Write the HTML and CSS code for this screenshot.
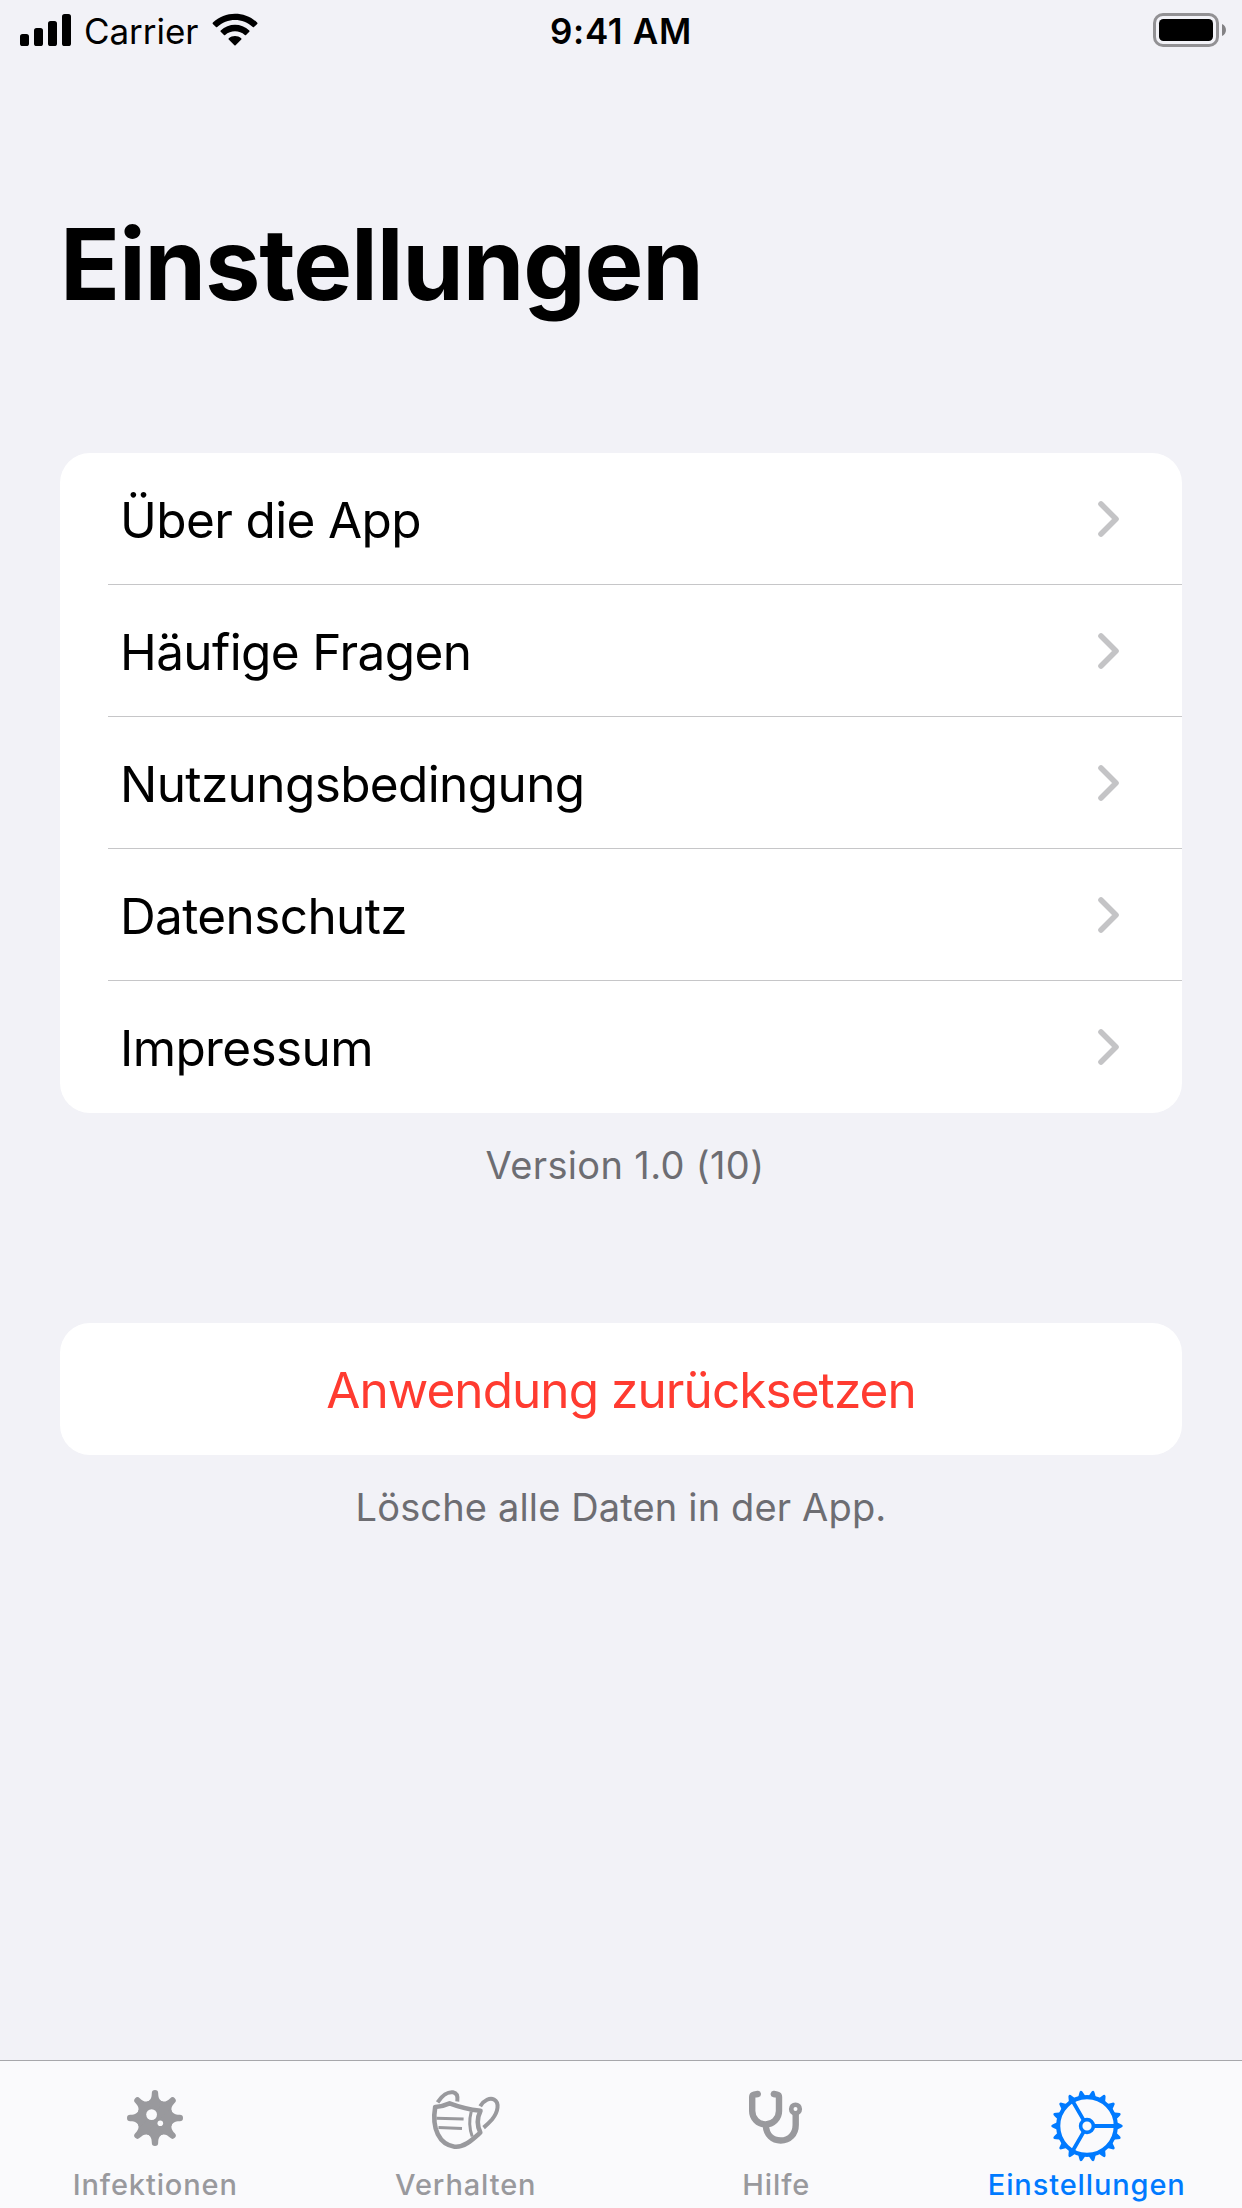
FILE: index.html
```html
<!DOCTYPE html>
<html lang="de">
<head>
<meta charset="utf-8">
<title>Einstellungen</title>
<link rel="stylesheet" href="styles.css">
</head>
<body>
<div class="screen">
  <header class="status">
    <div class="status-left">
      <svg class="signal" width="52" height="32" viewBox="0 0 52 32"><rect x="0" y="20" width="9" height="12" rx="2.6"/><rect x="14" y="14" width="9" height="18" rx="2.6"/><rect x="28" y="7" width="9" height="25" rx="2.6"/><rect x="42" y="0" width="9" height="32" rx="2.6"/></svg>
      <span class="carrier">Carrier</span>
      <svg class="wifi" width="46" height="34" viewBox="0 0 46 34"><path d="M.9 9.4C13.2-2.3 32.8-2.3 45.1 9.4c.6.6.6 1 .1 1.5L42 14.100q-.6.5-1.200 0C31 4.700 15 4.700 5.200 14.100q-.6.5-1.200 0L.8 10.900q-.5-.8.100-1.500Z"/><path d="M8.700 17.400C16.700 9.700 29.300 9.700 37.300 17.400q.6.700 0 1.300L34 21.900q-.6.5-1.200 0C27.300 17 18.700 17 13.200 21.900q-.6.5-1.200 0L8.700 18.700q-.6-.6 0-1.300Z"/><path d="M16.800 25.300C20.300 22.200 25.700 22.200 29.200 25.300q.7.700.1 1.300L23.600 32.300q-.6.500-1.200 0L16.700 26.600q-.6-.6.100-1.300Z"/></svg>
    </div>
    <span class="time">9:41 AM</span>
    <div class="status-right">
      <svg width="74" height="34" viewBox="0 0 74 34"><rect x="1.500" y="1.500" width="63" height="31" rx="8.500" fill="none" stroke="#929194" stroke-width="3"/><rect x="6" y="6" width="54" height="22" rx="4.500"/><path d="M69 11c5.300 2 5.300 10 0 12Z" fill="#838285"/></svg>
    </div>
  </header>
  <main class="content">
    <h1 class="title">Einstellungen</h1>
    <ul class="card">
      <li class="row"><span>Über die App</span><svg class="chev" width="21" height="36" viewBox="0 0 21 36"><path d="M3 3 18 18 3 33"/></svg></li>
      <li class="row"><span>Häufige Fragen</span><svg class="chev" width="21" height="36" viewBox="0 0 21 36"><path d="M3 3 18 18 3 33"/></svg></li>
      <li class="row"><span>Nutzungsbedingung</span><svg class="chev" width="21" height="36" viewBox="0 0 21 36"><path d="M3 3 18 18 3 33"/></svg></li>
      <li class="row"><span>Datenschutz</span><svg class="chev" width="21" height="36" viewBox="0 0 21 36"><path d="M3 3 18 18 3 33"/></svg></li>
      <li class="row"><span>Impressum</span><svg class="chev" width="21" height="36" viewBox="0 0 21 36"><path d="M3 3 18 18 3 33"/></svg></li>
    </ul>
    <p class="note version">Version 1.0 (10)</p>
    <button class="reset">Anwendung zurücksetzen</button>
    <p class="note">Lösche alle Daten in der App.</p>
  </main>
  <nav class="tabs">
    <a class="tab">
      <svg width="72" height="72" viewBox="0 0 72 72"><g fill="currentColor"><circle cx="36" cy="36" r="18"/><path id="arm" d="M32.800 11.200a3.200 3.200 0 0 1 6.400 0C39.200 16.500 41 19 45.500 20.500L36 30 26.500 20.500C31 19 32.800 16.500 32.800 11.200Z"/><use href="#arm" transform="rotate(45 36 36)"/><use href="#arm" transform="rotate(90 36 36)"/><use href="#arm" transform="rotate(135 36 36)"/><use href="#arm" transform="rotate(180 36 36)"/><use href="#arm" transform="rotate(225 36 36)"/><use href="#arm" transform="rotate(270 36 36)"/><use href="#arm" transform="rotate(315 36 36)"/></g><circle cx="32.600" cy="32.600" r="5.400" fill="#fafafc"/><circle cx="41.300" cy="41.300" r="2.800" fill="#fafafc"/></svg>
      <span>Infektionen</span>
    </a>
    <a class="tab">
      <svg width="72" height="72" viewBox="0 0 72 72" fill="none" stroke="currentColor" stroke-linejoin="round"><path stroke-width="4" d="M7.600 20.300C12 13.500 18 9.500 23 10.300C27.500 11 28 14.500 27.300 19.500"/><path stroke-width="4" d="M50.200 24.200C54 18 60 15.500 64 17.500C69.500 20.500 68.500 29.500 62 37.500Q58 42 53.600 45.600"/><path stroke-width="4.600" d="M5.200 25Q12.500 24.500 19.600 21.300Q34 26.800 50.500 28.800C47 36 47.200 44 50.300 50.600C42 58 34 65.800 24.500 64.700C9.500 62.500 1.500 47 5.200 25Z"/><path stroke-width="3" d="M41.200 29.700C39 38 39 46 42.200 54.500M6.500 36.200 33.600 37M8.500 45.500 32 46.500"/></svg>
      <span>Verhalten</span>
    </a>
    <a class="tab">
      <svg width="72" height="72" viewBox="0 0 72 72" fill="none" stroke="currentColor" stroke-width="6.400" stroke-linecap="round"><path d="M17.800 12 14 12.600Q12.200 12.900 12.200 15V29A13.400 13.400 0 0 0 39 29V15Q39 12.900 37.200 12.600L33.800 12"/><path stroke-linecap="butt" d="M25.800 43.500C26.500 53 32.500 58.500 40.700 58.500C49.500 58.500 55.700 52 55.700 43V32"/><circle cx="55.500" cy="27" r="4.300" stroke-width="4.600"/></svg>
      <span>Hilfe</span>
    </a>
    <a class="tab active">
      <svg class="gear" width="72" height="72" viewBox="0 0 72 72" fill="none" stroke="currentColor"><circle cx="36" cy="36" r="28.800" stroke-width="4.200"/><circle cx="36" cy="36" r="6.400" stroke-width="3.600"/><path stroke-width="3.800" d="M43 36H65M32.500 29.900 21.600 11M32.500 42.100 21.600 61"/><g id="teeth"></g></svg>
      <span>Einstellungen</span>
    </a>
  </nav>
</div>
<script src="gear.js"></script>
</body>
</html>
```
FILE: gear.js
```js
// Adds the eighteen teeth around the rim of the settings gear.
const teeth = document.getElementById("teeth");
for (let i = 0; i < 18; i++) {
  const tooth = document.createElementNS("http://www.w3.org/2000/svg", "path");
  tooth.setAttribute("d", "M64 31.500 69.500 34Q71.800 34.800 71.800 36T69.500 38L64 40.500Z");
  tooth.setAttribute("fill", "currentColor");
  tooth.setAttribute("stroke", "none");
  tooth.setAttribute("transform", `rotate(${i * 20} 36 36)`);
  teeth.appendChild(tooth);
}
```
FILE: styles.css
```css
* { box-sizing: border-box; }
body { margin: 0; background: #f2f2f7; color: #000; font-family: Inter, "Liberation Sans", sans-serif; }
.screen { width: 1242px; height: 2208px; display: flex; flex-direction: column; }
.status { height: 60px; display: grid; grid-template-columns: 1fr auto 1fr; padding: 0 15px; }
.status-left { display: flex; align-items: flex-start; }
.signal { margin: 14px 0 0 5px; }
.carrier { margin-left: 12px; font-size: 35px; line-height: 62px; letter-spacing: -0.05px; }
.wifi { margin: 13px 0 0 14px; }
.time { font-size: 35px; font-weight: 600; line-height: 62px; letter-spacing: 0.7px; }
.status-right { display: flex; justify-content: flex-end; padding-top: 13px; }
.content { flex: 1; padding: 0 60px; }
.title { margin: 0; padding: 144px 0 0 0; height: 393px; font-size: 99px; line-height: 120px; font-weight: 700; letter-spacing: -1.2px; }
.card { margin: 0; padding: 0; list-style: none; background: #fff; border-radius: 30px; height: 660px; }
.row { height: 132px; display: flex; align-items: center; justify-content: space-between; padding: 0 63px 0 60px; font-size: 49.5px; letter-spacing: -0.62px; background: linear-gradient(#c6c6c8, #c6c6c8) 48px 131px / 100% 1px no-repeat; }
.row span { padding-top: 2px; }
.row:last-child { background: none; }
.chev { fill: none; stroke: #c4c4c6; stroke-width: 5.6px; stroke-linecap: round; stroke-linejoin: round; }
.note { margin: 0; text-align: center; font-size: 38px; line-height: 46px; color: #6d6d72; padding-top: 29px; letter-spacing: 0.15px; }
.version { height: 210px; padding-left: 8px; letter-spacing: 0.35px; }
.reset { display: block; width: 100%; height: 132px; border: 0; border-radius: 30px; background: #fff; color: #ff3b30; font: 400 49.5px Inter, "Liberation Sans", sans-serif; letter-spacing: -0.93px; padding: 2px 0 0; }
.tabs { height: 148px; display: grid; grid-template-columns: repeat(4, 1fr); background: #fafafc; border-top: 1px solid #a7a7ab; color: #99999d; }
.tab { display: flex; flex-direction: column; align-items: center; padding-top: 21px; font-size: 29px; font-weight: 500; letter-spacing: 0.88px; }
.tab span { line-height: 36px; margin-top: 13px; }
.gear { position: relative; top: 8px; }
.active { color: #007aff; }
```
